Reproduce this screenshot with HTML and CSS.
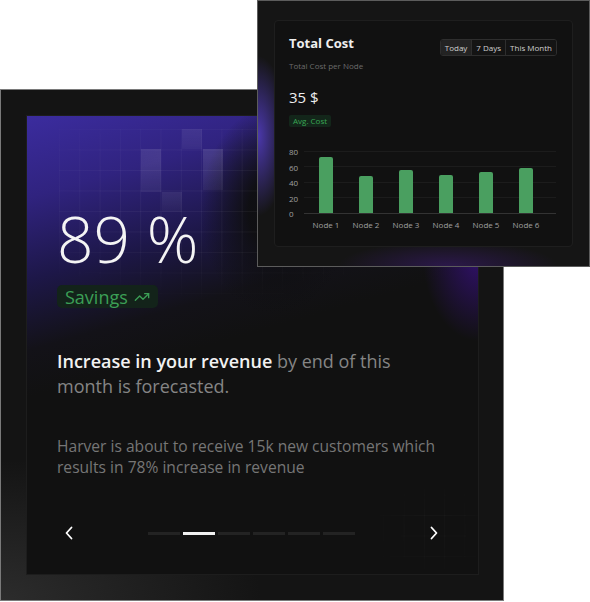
FILE: index.html
```html
<!DOCTYPE html>
<html lang="en">
<head>
    <meta charset="UTF-8">
    <meta name="viewport" content="width=device-width, initial-scale=1.0">
    <title>Revenue Insight</title>
    <link rel="stylesheet" href="styles.css">
</head>
<body>
    <div class="stage">
        <section class="insight">
            <div class="insight-inner">
                <div class="grid-deco">
                    <span class="cell cell-a"></span>
                    <span class="cell cell-b"></span>
                    <span class="cell cell-c"></span>
                    <span class="cell cell-d"></span>
                </div>
                <div class="grid-deco grid-deco-low"></div>
                <div class="insight-body">
                    <div class="stat">89 %</div>
                    <div class="badge-savings">
                        Savings
                        <svg width="16" height="16" viewBox="0 0 24 24" fill="none" stroke="currentColor" stroke-width="2" stroke-linecap="round" stroke-linejoin="round">
                            <polyline points="22 7 13.5 15.5 8.5 10.5 2 17"></polyline>
                            <polyline points="16 7 22 7 22 13"></polyline>
                        </svg>
                    </div>
                    <p class="headline"><strong>Increase in your revenue</strong> by end of this month is forecasted.</p>
                    <p class="detail">Harver is about to receive 15k new customers which results in 78% increase in revenue</p>
                </div>
                <div class="slider-nav">
                    <button class="nav-btn" aria-label="Previous">
                        <svg width="10" height="16" viewBox="0 0 10 16" fill="none" stroke="currentColor" stroke-width="1.8" stroke-linecap="round" stroke-linejoin="round"><polyline points="7.5 2.5 2.5 8 7.5 13.5"></polyline></svg>
                    </button>
                    <div class="dots">
                        <span></span>
                        <span class="active"></span>
                        <span></span>
                        <span></span>
                        <span></span>
                        <span></span>
                    </div>
                    <button class="nav-btn" aria-label="Next">
                        <svg width="10" height="16" viewBox="0 0 10 16" fill="none" stroke="currentColor" stroke-width="1.8" stroke-linecap="round" stroke-linejoin="round"><polyline points="2.5 2.5 7.5 8 2.5 13.5"></polyline></svg>
                    </button>
                </div>
            </div>
        </section>

        <section class="cost-card">
            <div class="cost-inner">
                <div class="cost-head">
                    <div>
                        <h2 class="cost-title">Total Cost</h2>
                        <p class="cost-sub">Total Cost per Node</p>
                    </div>
                    <div class="range">
                        <button class="on">Today</button>
                        <button>7 Days</button>
                        <button>This Month</button>
                    </div>
                </div>
                <div class="cost-value">35 $</div>
                <span class="avg">Avg. Cost</span>
                <div class="chart">
                    <div class="y-axis">
                        <span>80</span>
                        <span>60</span>
                        <span>40</span>
                        <span>20</span>
                        <span>0</span>
                    </div>
                    <div class="plot-wrap">
                        <div class="plot">
                            <div class="slot"><div class="bar" style="height: 55.8px"></div></div>
                            <div class="slot"><div class="bar" style="height: 37.2px"></div></div>
                            <div class="slot"><div class="bar" style="height: 43.4px"></div></div>
                            <div class="slot"><div class="bar" style="height: 38px"></div></div>
                            <div class="slot"><div class="bar" style="height: 41px"></div></div>
                            <div class="slot"><div class="bar" style="height: 45px"></div></div>
                        </div>
                        <div class="x-axis">
                            <span>Node 1</span>
                            <span>Node 2</span>
                            <span>Node 3</span>
                            <span>Node 4</span>
                            <span>Node 5</span>
                            <span>Node 6</span>
                        </div>
                    </div>
                </div>
            </div>
        </section>
    </div>
</body>
</html>
```

FILE: styles.css
```css
body {
    margin: 0;
    padding: 0;
    background-color: #ffffff;
    font-family: "Open Sans", "Noto Sans", sans-serif;
    color: #eeeeee;
}
.stage {
    position: relative;
    width: 590px;
    height: 602px;
    padding-top: 89px;
    box-sizing: border-box;
    overflow: hidden;
}

/* big insight card */
.insight {
    width: 504px;
    height: 512px;
    box-sizing: border-box;
    border: 1px solid #7a7a7a;
    padding: 25px 24px 25px 25px;
    background:
        radial-gradient(ellipse 260px 140px at 0% 100%, #2c2c2c, rgba(20, 20, 20, 0)),
        #141414;
}
.insight-inner {
    position: relative;
    height: 100%;
    box-sizing: border-box;
    border: 1px solid #1d1d1d;
    overflow: hidden;
    display: flex;
    flex-direction: column;
    background:
        radial-gradient(ellipse 75px 105px at 248px 95px, rgba(15, 15, 17, 0.97) 35%, rgba(15, 15, 17, 0)),
        radial-gradient(ellipse 55px 85px at 100% 140px, rgba(50, 16, 112, 0.95), rgba(17, 17, 17, 0)),
        linear-gradient(164deg, #3b2c9e 0%, #30237f 14%, #1d1748 28%, #131218 40%, #111111 48%);
}
.grid-deco {
    position: absolute;
    left: 32px;
    top: 13px;
    width: 426px;
    height: 200px;
    background-image:
        linear-gradient(to right, rgba(255, 255, 255, 0.045) 1px, transparent 1px),
        linear-gradient(to bottom, rgba(255, 255, 255, 0.045) 1px, transparent 1px);
    background-size: 20.3px 20.5px;
    -webkit-mask-image: radial-gradient(ellipse 55% 55% at 35% 35%, #000 40%, transparent 100%);
    mask-image: radial-gradient(ellipse 55% 55% at 35% 35%, #000 40%, transparent 100%);
}
.grid-deco-low {
    left: 336px;
    top: 358px;
    width: 140px;
    height: 110px;
    background-image:
        linear-gradient(to right, rgba(255, 255, 255, 0.02) 1px, transparent 1px),
        linear-gradient(to bottom, rgba(255, 255, 255, 0.02) 1px, transparent 1px);
    -webkit-mask-image: radial-gradient(ellipse 50% 50% at 50% 50%, #000 30%, transparent 100%);
    mask-image: radial-gradient(ellipse 50% 50% at 50% 50%, #000 30%, transparent 100%);
}
.cell {
    position: absolute;
    width: 20px;
    background: linear-gradient(to bottom, rgba(255, 255, 255, 0.12), rgba(255, 255, 255, 0.05));
}
.cell-a { left: 123px; top: 0; height: 20px; }
.cell-b { left: 82px; top: 20px; height: 43px; }
.cell-c { left: 144px; top: 20px; height: 41px; }
.cell-d { left: 103px; top: 63px; height: 20px; background: linear-gradient(to bottom, rgba(255, 255, 255, 0.08), rgba(255, 255, 255, 0.03)); }

.insight-body {
    position: relative;
    padding: 91px 32px 0 30px;
    flex: 1;
}
.stat {
    font-size: 64px;
    font-weight: 300;
    line-height: 64px;
    color: #f4f4f4;
}
.badge-savings {
    display: inline-flex;
    align-items: center;
    gap: 6px;
    margin-top: 14px;
    height: 23px;
    padding: 0 8px;
    border-radius: 5px;
    background-color: #13231a;
    color: #3c9f56;
    font-size: 18px;
}
.headline {
    margin: 40px 0 0;
    max-width: 350px;
    font-size: 18px;
    line-height: 25px;
    color: #858585;
}
.headline strong {
    font-weight: 600;
    color: #f2f2f2;
}
.detail {
    margin: 37px 0 0;
    font-size: 15.6px;
    line-height: 21px;
    color: #767676;
}
.slider-nav {
    position: relative;
    display: flex;
    align-items: center;
    justify-content: space-between;
    height: 24px;
    padding: 0 32px 29px 30px;
}
.nav-btn {
    width: 24px;
    height: 24px;
    padding: 0;
    border: none;
    background: none;
    color: #ffffff;
    display: flex;
    align-items: center;
    justify-content: center;
    cursor: pointer;
}
.dots {
    display: flex;
    gap: 3px;
}
.dots span {
    width: 32px;
    height: 3px;
    background-color: #232323;
}
.dots .active {
    background-color: #f0f0f0;
}

/* total cost card */
.cost-card {
    position: absolute;
    left: 257px;
    top: 0;
    width: 333px;
    height: 267px;
    box-sizing: border-box;
    border: 1px solid #5c5c5c;
    padding: 19px 16px 19px 16px;
    background:
        radial-gradient(ellipse 30px 80px at 0 135px, rgba(78, 58, 180, 0.95), rgba(21, 21, 21, 0)),
        radial-gradient(ellipse 110px 25px at 190px 100%, rgba(58, 26, 110, 0.6), rgba(21, 21, 21, 0)),
        #151515;
}
.cost-inner {
    height: 100%;
    box-sizing: border-box;
    border: 1px solid #1e1e1e;
    border-radius: 4px;
    background-color: #111111;
    padding: 14px 15px 0 14px;
}
.cost-head {
    display: flex;
    justify-content: space-between;
    align-items: flex-start;
}
.cost-title {
    margin: 0;
    font-size: 13px;
    font-weight: 700;
    line-height: 16px;
    color: #eeeeee;
}
.cost-sub {
    margin: 9px 0 0;
    font-size: 8px;
    line-height: 11px;
    color: #6c6c6c;
}
.range {
    display: flex;
    margin-top: 4px;
    border: 1px solid #2e2e2e;
    border-radius: 3px;
    overflow: hidden;
}
.range button {
    height: 15px;
    padding: 0 4px;
    border: none;
    border-left: 1px solid #2e2e2e;
    background-color: #141414;
    color: #cfcfcf;
    font-family: inherit;
    font-size: 8px;
    line-height: 15px;
}
.range button:first-child {
    border-left: none;
}
.range .on {
    background-color: #232323;
}
.cost-value {
    margin-top: 16px;
    font-size: 15px;
    line-height: 20px;
    color: #eeeeee;
}
.avg {
    display: inline-block;
    margin-top: 6px;
    padding: 0 4px;
    height: 12px;
    line-height: 12px;
    font-size: 8px;
    border-radius: 2px;
    background-color: #13261a;
    color: #3aa655;
}
.chart {
    display: flex;
    margin-top: 18px;
}
.y-axis {
    width: 15px;
    height: 72px;
    display: flex;
    flex-direction: column;
    justify-content: space-between;
}
.y-axis span {
    font-size: 8px;
    line-height: 10px;
    color: #a0a0a0;
}
.plot-wrap {
    width: 252px;
}
.plot {
    display: flex;
    align-items: flex-end;
    height: 62px;
    margin-top: 4px;
    padding-left: 2px;
    border-bottom: 1px solid #333333;
    background-image: repeating-linear-gradient(to bottom, #1c1c1c 0, #1c1c1c 1px, transparent 1px, transparent 15.5px);
}
.slot {
    width: 40px;
    display: flex;
    justify-content: center;
}
.bar {
    width: 14px;
    border-radius: 2px 2px 0 0;
    background-color: #4a9f60;
}
.x-axis {
    display: flex;
    padding-left: 2px;
    margin-top: 5px;
}
.x-axis span {
    width: 40px;
    text-align: center;
    font-size: 8px;
    line-height: 11px;
    color: #a0a0a0;
}
```
